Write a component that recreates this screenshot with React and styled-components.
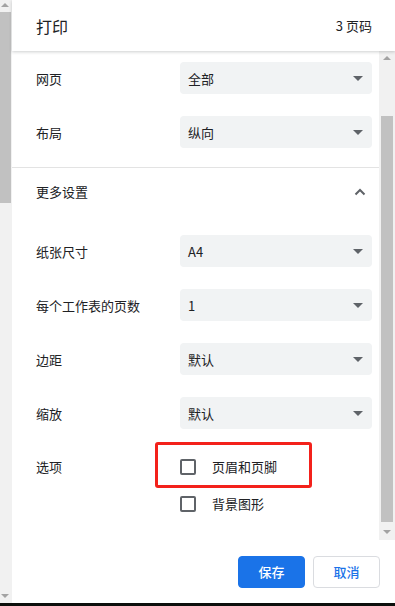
import styled, { createGlobalStyle } from "styled-components";

const GlobalStyle = createGlobalStyle`
  html, body {
    margin: 0;
    padding: 0;
    background: #ffffff;
  }
  body {
    font-family: "Noto Sans CJK SC", "Liberation Sans", sans-serif;
    color: #202124;
  }
`;

const Screen = styled.div`
  width: 395px;
  height: 606px;
  display: flex;
  flex-direction: column;
  overflow: hidden;
`;

const Body = styled.div`
  flex: 1;
  display: flex;
  min-height: 0;
`;

const BottomEdge = styled.div`
  height: 3px;
  background: #0c0f0c;
`;

const Scrollbar = styled.div`
  width: ${(p) => p.width}px;
  background: #f1f1f1;
  position: relative;
  flex-shrink: 0;
`;

const Thumb = styled.div`
  position: absolute;
  left: ${(p) => p.left}px;
  right: ${(p) => p.right}px;
  top: ${(p) => p.top}px;
  height: ${(p) => p.height}px;
  background: #c1c1c1;
`;

const Arrow = styled.div`
  position: absolute;
  left: ${(p) => p.left}px;
  ${(p) => (p.down ? `bottom: ${p.offset}px;` : `top: ${p.offset}px;`)}
  width: 0;
  height: 0;
  border-left: 4px solid transparent;
  border-right: 4px solid transparent;
  ${(p) =>
    p.down
      ? "border-top: 4px solid #a3a3a3;"
      : "border-bottom: 4px solid #a3a3a3;"}
`;

const Main = styled.div`
  flex: 1;
  display: flex;
  flex-direction: column;
  min-width: 0;
`;

const Header = styled.div`
  height: 51px;
  display: flex;
  align-items: center;
  justify-content: space-between;
  padding: 0 23px 0 24px;
  background: #fff;
  box-shadow: 0 1px 3px rgba(60, 64, 67, 0.25);
  position: relative;
  z-index: 1;
`;

const Title = styled.h1`
  margin: 0;
  font-size: 16px;
  font-weight: 400;
  color: #202124;
`;

const PageCount = styled.span`
  font-size: 13px;
  color: #202124;
`;

const ScrollArea = styled.div`
  height: 489px;
  display: flex;
`;

const Content = styled.div`
  flex: 1;
  overflow: hidden;
`;

const Row = styled.div`
  height: 54px;
  display: flex;
  align-items: center;
  padding: 0 7px 0 24px;
`;

const Label = styled.div`
  width: 144px;
  font-size: 13px;
  color: #202124;
`;

const Select = styled.div`
  flex: 1;
  height: 32px;
  border-radius: 4px;
  background: #f1f3f4;
  display: flex;
  align-items: center;
  justify-content: space-between;
  padding: 0 9px 0 8px;
  font-size: 13px;
  color: #202124;
`;

const Caret = styled.span`
  width: 0;
  height: 0;
  border-left: 5px solid transparent;
  border-right: 5px solid transparent;
  border-top: 5px solid #5f6368;
`;

const Divider = styled.div`
  height: 1px;
  background: #e3e3e3;
  margin-top: 8px;
`;

const MoreHeader = styled.div`
  height: 47px;
  display: flex;
  align-items: center;
  justify-content: space-between;
  padding: 0 13px 0 24px;
  margin-bottom: 9px;
  font-size: 13px;
`;

const OptionsRow = styled.div`
  display: flex;
  align-items: flex-start;
  padding: 8px 7px 0 24px;
`;

const OptionLabel = styled(Label)`
  height: 37px;
  line-height: 37px;
`;

const OptionList = styled.div`
  display: flex;
  flex-direction: column;
`;

const Option = styled.div`
  position: relative;
  height: 37px;
  display: flex;
  align-items: center;
  gap: 16px;
  font-size: 13px;
  color: #202124;
`;

const Box = styled.span`
  width: 12px;
  height: 12px;
  border: 2px solid #5f6368;
  border-radius: 2px;
`;

const Highlight = styled.div`
  position: absolute;
  left: -25px;
  top: -6px;
  width: 151px;
  height: 40px;
  border: 3px solid #f3211b;
  border-radius: 3px;
`;

const Footer = styled.div`
  flex: 1;
  display: flex;
  align-items: center;
  justify-content: flex-end;
  gap: 8px;
  padding: 0 15px 0 0;
`;

const Button = styled.button`
  width: 67px;
  height: 32px;
  border-radius: 4px;
  font-family: inherit;
  font-size: 13px;
  font-weight: 500;
  cursor: pointer;
  border: 1px solid ${(p) => (p.primary ? "#1a73e8" : "#dadce0")};
  background: ${(p) => (p.primary ? "#1a73e8" : "#ffffff")};
  color: ${(p) => (p.primary ? "#ffffff" : "#1a73e8")};
`;

const Chevron = () => (
  <svg width="12" height="8" viewBox="0 0 12 8">
    <path d="M1.5 6.5 L6 2 L10.5 6.5" fill="none" stroke="#5f6368" strokeWidth="2" />
  </svg>
);

const selects = [
  ["纸张尺寸", "A4"],
  ["每个工作表的页数", "1"],
  ["边距", "默认"],
  ["缩放", "默认"],
];

const App = () => {
  return (
    <>
      <GlobalStyle />
      <Screen>
        <Body>
          <Scrollbar width={12}>
            <Arrow left={1} offset={3} />
            <Thumb left={0} right={1} top={12} height={191} />
            <Arrow left={1} offset={5} down />
          </Scrollbar>
          <Main>
            <Header>
              <Title>打印</Title>
              <PageCount>3 页码</PageCount>
            </Header>
            <ScrollArea>
              <Content>
                <Row>
                  <Label>网页</Label>
                  <Select>
                    全部
                    <Caret />
                  </Select>
                </Row>
                <Row>
                  <Label>布局</Label>
                  <Select>
                    纵向
                    <Caret />
                  </Select>
                </Row>
                <Divider />
                <MoreHeader>
                  更多设置
                  <Chevron />
                </MoreHeader>
                {selects.map(([label, value]) => (
                  <Row key={label}>
                    <Label>{label}</Label>
                    <Select>
                      {value}
                      <Caret />
                    </Select>
                  </Row>
                ))}
                <OptionsRow>
                  <OptionLabel>选项</OptionLabel>
                  <OptionList>
                    <Option>
                      <Highlight />
                      <Box />
                      页眉和页脚
                    </Option>
                    <Option>
                      <Box />
                      背景图形
                    </Option>
                  </OptionList>
                </OptionsRow>
              </Content>
              <Scrollbar width={16}>
                <Arrow left={4} offset={5} />
                <Thumb left={2} right={2} top={65} height={406} />
                <Arrow left={4} offset={6} down />
              </Scrollbar>
            </ScrollArea>
            <Footer>
              <Button primary>保存</Button>
              <Button>取消</Button>
            </Footer>
          </Main>
        </Body>
        <BottomEdge />
      </Screen>
    </>
  );
};

export default App;
